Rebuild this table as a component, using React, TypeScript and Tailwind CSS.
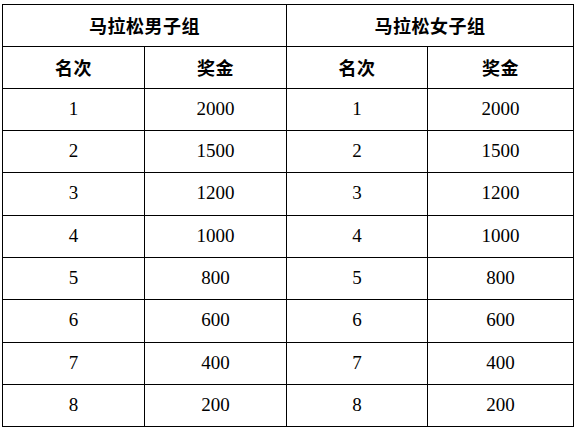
import React from "react";

const rows: [string, string][] = [
  ["1", "2000"],
  ["2", "1500"],
  ["3", "1200"],
  ["4", "1000"],
  ["5", "800"],
  ["6", "600"],
  ["7", "400"],
  ["8", "200"],
];

const rowHeights = ["h-[42px]", "h-[42px]", "h-[43px]", "h-[42px]", "h-[42px]", "h-[43px]", "h-[42px]", "h-[42px]"];

const cjk = { fontFamily: '"Noto Sans CJK SC", sans-serif' };

export default function App() {
  return (
    <div className="bg-white w-[576px] h-[430px] pl-[2px] pt-[3.5px]">
      <table
        className="border-collapse table-fixed text-black w-[571px]"
        style={{ fontFamily: '"Liberation Serif", "Noto Sans CJK SC", serif' }}
      >
        <colgroup>
          <col className="w-[142px]" />
          <col className="w-[142px]" />
          <col className="w-[141px]" />
          <col className="w-[146px]" />
        </colgroup>
        <thead>
          <tr className="h-[42px]">
            <th colSpan={2} className="border border-black p-0 text-[18px] font-bold tracking-[0.5px]" style={cjk}>
              马拉松男子组
            </th>
            <th colSpan={2} className="border border-black p-0 text-[18px] font-bold tracking-[0.5px]" style={cjk}>
              马拉松女子组
            </th>
          </tr>
          <tr className="h-[42px]">
            <th className="border border-black p-0 text-[18px] font-bold tracking-[0.5px]" style={cjk}>名次</th>
            <th className="border border-black p-0 text-[18px] font-bold tracking-[0.5px]" style={cjk}>奖金</th>
            <th className="border border-black p-0 text-[18px] font-bold tracking-[0.5px]" style={cjk}>名次</th>
            <th className="border border-black p-0 text-[18px] font-bold tracking-[0.5px]" style={cjk}>奖金</th>
          </tr>
        </thead>
        <tbody>
          {rows.map(([rank, prize], i) => (
            <tr key={rank} className={rowHeights[i]}>
              <td className="border border-black p-0 text-center text-[19px]">{rank}</td>
              <td className="border border-black p-0 text-center text-[19px]">{prize}</td>
              <td className="border border-black p-0 text-center text-[19px]">{rank}</td>
              <td className="border border-black p-0 text-center text-[19px]">{prize}</td>
            </tr>
          ))}
        </tbody>
      </table>
    </div>
  );
}
